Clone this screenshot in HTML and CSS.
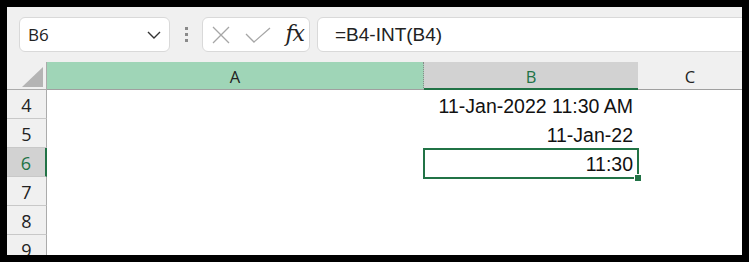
FILE: index.html
```html
<!DOCTYPE html>
<html lang="en">
<head>
    <meta charset="UTF-8">
    <title>Formula Bar</title>
    <link rel="stylesheet" href="styles.css">
</head>
<body>
    <div class="window">
        <div class="toolbar">
            <div class="name-box">
                <span>B6</span>
                <svg width="14" height="8" viewBox="0 0 14 8"><polyline points="1,1 7,7 13,1" fill="none" stroke="#333" stroke-width="1.4"/></svg>
            </div>
            <div class="grip">
                <span></span><span></span><span></span>
            </div>
            <div class="fx-box">
                <svg width="18" height="18" viewBox="0 0 18 18"><path d="M1 1 L17 17 M17 1 L1 17" stroke="#a6a6a6" stroke-width="1.3" fill="none"/></svg>
                <svg width="26" height="16" viewBox="0 0 26 16"><polyline points="1,7 9,15 25,1" stroke="#a6a6a6" stroke-width="1.3" fill="none"/></svg>
                <span class="fx">fx</span>
            </div>
            <div class="formula">=B4-INT(B4)</div>
        </div>

        <div class="grid">
            <div class="corner"><div class="tri"></div></div>
            <div class="col-head col-a">A</div>
            <div class="col-head col-b">B</div>
            <div class="col-head">C</div>

            <div class="row-head">4</div>
            <div class="cell"></div>
            <div class="cell num">11-Jan-2022 11:30 AM</div>
            <div class="cell"></div>

            <div class="row-head">5</div>
            <div class="cell"></div>
            <div class="cell num">11-Jan-22</div>
            <div class="cell"></div>

            <div class="row-head active">6</div>
            <div class="cell"></div>
            <div class="cell num selected">11:30<span class="handle"></span></div>
            <div class="cell"></div>

            <div class="row-head">7</div>
            <div class="cell"></div>
            <div class="cell"></div>
            <div class="cell"></div>

            <div class="row-head">8</div>
            <div class="cell"></div>
            <div class="cell"></div>
            <div class="cell"></div>

            <div class="row-head">9</div>
            <div class="cell"></div>
            <div class="cell"></div>
            <div class="cell"></div>
        </div>
    </div>
</body>
</html>
```

FILE: styles.css
```css
body {
    margin: 0;
    background-color: #000;
    font-family: "Open Sans", sans-serif;
}

.window {
    margin: 7px;
    width: 735px;
    height: 248px;
    overflow: hidden;
    background-color: #f0f0f0;
}

/* formula bar */
.toolbar {
    height: 55px;
    box-sizing: border-box;
    padding: 10px 0 0 12px;
    display: flex;
    align-items: flex-start;
}

.name-box,
.fx-box,
.formula {
    height: 35px;
    box-sizing: border-box;
    background-color: #fff;
    border: 1px solid #d9d9d9;
    border-radius: 6px;
    display: flex;
    align-items: center;
}

.name-box {
    width: 151px;
    justify-content: space-between;
    padding: 0 8px 0 8px;
    font-size: 17px;
    color: #222;
}

.grip {
    width: 32px;
    height: 35px;
    display: flex;
    flex-direction: column;
    align-items: center;
    justify-content: center;
    gap: 3px;
}

.grip span {
    width: 3px;
    height: 3px;
    background-color: #8a8a8a;
}

.fx-box {
    width: 108px;
    padding: 0 5px 0 9px;
    justify-content: space-between;
}

.fx {
    font-family: "DejaVu Serif", serif;
    font-style: italic;
    font-size: 22px;
    color: #222;
    margin-top: -3px;
    letter-spacing: -1px;
}

.formula {
    flex: 1;
    margin-left: 7px;
    margin-right: -10px;
    padding-left: 17px;
    font-family: "Liberation Sans", sans-serif;
    font-size: 19px;
    color: #222;
}

/* sheet */
.grid {
    display: grid;
    grid-template-columns: 40px 377px 214px 1fr;
    grid-template-rows: 28px repeat(6, 29px);
    background-color: #fff;
}

.corner {
    background-color: #f0f0f0;
    border-right: 1px solid #ababab;
    border-bottom: 1px solid #ababab;
    display: flex;
    justify-content: flex-end;
    align-items: flex-end;
    padding: 0 3px 2px 0;
}

.tri {
    width: 21px;
    height: 20px;
    background-color: #b4b4b4;
    clip-path: polygon(100% 0, 100% 100%, 0 100%);
}

.col-head {
    background-color: #f0f0f0;
    border-bottom: 1px solid #a0a0a0;
    display: flex;
    justify-content: center;
    align-items: center;
    padding-top: 2px;
    font-size: 16.5px;
    color: #222;
}

.col-a {
    background-color: #9fd5b7;
    border-right: 1px dotted #8a8a8a;
}

.col-b {
    background-color: #d2d2d2;
    border-bottom: 2px solid #217346;
    color: #217346;
}

.row-head {
    background-color: #f0f0f0;
    border-right: 1px solid #ababab;
    border-bottom: 1px solid #c8c8c8;
    display: flex;
    justify-content: center;
    align-items: center;
    padding-top: 2px;
    font-size: 18px;
    color: #222;
}

.row-head.active {
    background-color: #d2d2d2;
    border-right: 2px solid #217346;
    color: #217346;
}

.cell {
    position: relative;
}

.num {
    text-align: right;
    padding: 4px 5px 0 0;
    line-height: 25px;
    font-family: "Liberation Sans", sans-serif;
    font-size: 19.5px;
    color: #111;
}

.selected::before {
    content: "";
    position: absolute;
    top: 0;
    left: -1px;
    right: -1px;
    bottom: -2px;
    border: 2px solid #217346;
}

.handle {
    position: absolute;
    right: -4px;
    bottom: -5px;
    width: 6px;
    height: 6px;
    background-color: #217346;
    border: 1px solid #fff;
}
```
